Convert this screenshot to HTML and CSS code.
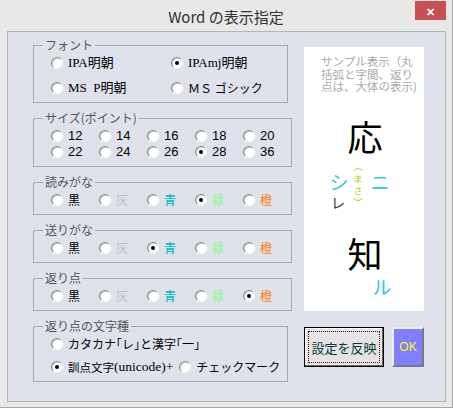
FILE: index.html
```html
<!DOCTYPE html>
<html lang="ja">
<head>
  <meta charset="UTF-8">
  <title>Word の表示指定</title>
  <link rel="stylesheet" href="styles.css">
</head>
<body>
  <div class="window">
    <div class="titlebar">
      <span class="title">Word の表示指定</span>
      <span class="close">&#x2715;</span>
    </div>
    <div class="client">
      <div class="left">
        <fieldset class="group">
          <legend>フォント</legend>
          <div class="grid fonts">
            <label class="opt serif"><span class="radio"></span>IPA明朝</label>
            <label class="opt serif"><span class="radio on"></span>IPAmj明朝</label>
            <label class="opt serif"><span class="radio"></span>MS&nbsp;&nbsp;P明朝</label>
            <label class="opt"><span class="radio"></span>ＭＳ ゴシック</label>
          </div>
        </fieldset>

        <fieldset class="group">
          <legend>サイズ(ポイント)</legend>
          <div class="grid five sizes">
            <label class="opt num"><span class="radio"></span>12</label>
            <label class="opt num"><span class="radio"></span>14</label>
            <label class="opt num"><span class="radio"></span>16</label>
            <label class="opt num"><span class="radio"></span>18</label>
            <label class="opt num"><span class="radio"></span>20</label>
            <label class="opt num"><span class="radio"></span>22</label>
            <label class="opt num"><span class="radio"></span>24</label>
            <label class="opt num"><span class="radio"></span>26</label>
            <label class="opt num"><span class="radio on"></span>28</label>
            <label class="opt num"><span class="radio"></span>36</label>
          </div>
        </fieldset>

        <fieldset class="group">
          <legend>読みがな</legend>
          <div class="grid five">
            <label class="opt c-black"><span class="radio"></span>黒</label>
            <label class="opt c-gray"><span class="radio"></span>灰</label>
            <label class="opt c-blue"><span class="radio"></span>青</label>
            <label class="opt c-green"><span class="radio on"></span>緑</label>
            <label class="opt c-orange"><span class="radio"></span>橙</label>
          </div>
        </fieldset>

        <fieldset class="group">
          <legend>送りがな</legend>
          <div class="grid five">
            <label class="opt c-black"><span class="radio"></span>黒</label>
            <label class="opt c-gray"><span class="radio"></span>灰</label>
            <label class="opt c-blue"><span class="radio on"></span>青</label>
            <label class="opt c-green"><span class="radio"></span>緑</label>
            <label class="opt c-orange"><span class="radio"></span>橙</label>
          </div>
        </fieldset>

        <fieldset class="group">
          <legend>返り点</legend>
          <div class="grid five">
            <label class="opt c-black"><span class="radio"></span>黒</label>
            <label class="opt c-gray"><span class="radio"></span>灰</label>
            <label class="opt c-blue"><span class="radio"></span>青</label>
            <label class="opt c-green"><span class="radio"></span>緑</label>
            <label class="opt c-orange"><span class="radio on"></span>橙</label>
          </div>
        </fieldset>

        <fieldset class="group">
          <legend>返り点の文字種</legend>
          <div class="kinds">
            <label class="opt"><span class="radio"></span>カタカナ｢レ｣と漢字｢一｣</label>
            <div class="kind-row">
              <label class="opt kunten"><span class="radio on"></span><span class="kanji">訓点文字</span>(unicode)+</label>
              <label class="opt"><span class="radio"></span>チェックマーク</label>
            </div>
          </div>
        </fieldset>
      </div>

      <div class="right">
        <div class="sample">
          <p class="note">サンプル表示（丸<br>括弧と字間、返り<br>点は、大体の表示)</p>
          <span class="glyph big" style="left: 61px; top: 88px;">応</span>
          <span class="glyph kana" style="left: 35px; top: 134px;">シ</span>
          <span class="glyph kana" style="left: 76px; top: 134px;">ニ</span>
          <span class="glyph ruby" style="left: 54px; top: 139px;">（まさ）</span>
          <span class="glyph mark" style="left: 34px; top: 155px;">レ</span>
          <span class="glyph big" style="left: 61px; top: 205px;">知</span>
          <span class="glyph kana" style="left: 78px; top: 239px;">ル</span>
        </div>
        <div class="buttons">
          <button class="btn apply">設定を反映</button>
          <button class="btn ok">OK</button>
        </div>
      </div>
    </div>
  </div>
</body>
</html>
```

FILE: styles.css
```css
body {
  margin: 0;
  font-family: "Noto Sans CJK JP", sans-serif;
  font-size: 12px;
  color: #000;
  background: #e8e8e8;
}

.window {
  width: 453px;
  height: 408px;
  box-sizing: border-box;
  border-right: 1px solid #a8a8a8;
  border-bottom: 1px solid #a8a8a8;
  background: #e8e8e8;
}

/* title bar */
.titlebar {
  position: relative;
  height: 31px;
  display: flex;
  justify-content: center;
  align-items: center;
}

.title {
  font-size: 15px;
  color: #333;
  margin-top: 1px;
  font-family: "Noto Sans CJK JP", sans-serif;
}

.close {
  position: absolute;
  top: 1px;
  right: 6px;
  width: 31px;
  height: 19px;
  background: #c75050;
  color: #fff;
  font-size: 11px;
  font-weight: bold;
  display: flex;
  justify-content: center;
  align-items: center;
}

/* client area */
.client {
  margin: 0 6px 0 7px;
  height: 371px;
  box-sizing: border-box;
  border: 1px solid #b4b4b4;
  background: #dfe2eb;
  display: flex;
  padding: 6px 0 0 25px;
}

.left {
  width: 255px;
}

.group {
  margin: 0 0 8px 0;
  padding: 4px 0 7px 17px;
  border: 1px solid #a9a9a9;
}

.group legend {
  padding: 0 2px;
  margin-left: -8px;
  line-height: 14px;
  color: #555;
}

.grid {
  display: grid;
  row-gap: 2px;
}

.fonts {
  grid-template-columns: 120px auto;
  row-gap: 11px;
}

.five {
  grid-template-columns: repeat(5, 48px);
}

.opt {
  display: flex;
  align-items: center;
  height: 14px;
  line-height: 14px;
  white-space: nowrap;
}

.serif {
  font-family: "Liberation Serif", "Noto Sans CJK JP", serif;
  font-size: 13px;
}

.kunten {
  font-family: "Liberation Serif", "Noto Sans CJK JP", serif;
  font-size: 13.5px;
}

.kunten .kanji {
  font-family: "Noto Sans CJK JP", sans-serif;
  font-size: 11.5px;
}

.num {
  font-family: "Liberation Sans", sans-serif;
  font-size: 13px;
}

/* classic radio button */
.radio {
  position: relative;
  flex: none;
  width: 10px;
  height: 10px;
  margin-right: 5px;
  border-radius: 50%;
  background: #fff;
  border: 1px solid;
  border-color: #8a8a8a #f4f4f4 #f4f4f4 #8a8a8a;
  box-shadow: inset 1px 1px 0 #cfcfcf;
}

.radio.on::after {
  content: '';
  position: absolute;
  left: 3px;
  top: 3px;
  width: 4px;
  height: 4px;
  border-radius: 50%;
  background: #000;
}

.c-black { color: #000; }
.c-gray { color: #c0c0c0; }
.c-blue { color: #00b4c4; }
.c-green { color: #80ff80; }
.c-orange { color: #ff8000; }

.kinds {
  display: flex;
  flex-direction: column;
  gap: 9px;
}

.kind-row {
  display: flex;
}

.kind-row .opt:first-child {
  margin-right: 6px;
}

/* sample panel and buttons */
.right {
  margin-left: 16px;
  margin-top: 9px;
  width: 120px;
}

.sample {
  position: relative;
  height: 264px;
  background: #fff;
}

.note {
  margin: 0;
  padding: 8px 0 0 17px;
  font-size: 11.5px;
  line-height: 12.5px;
  color: #aaa;
  white-space: nowrap;
}

.glyph {
  position: absolute;
  transform: translate(-50%, -50%);
  line-height: 1;
}

.big {
  font-size: 35px;
  color: #000;
}

.kana {
  font-size: 19px;
  color: #33c8d0;
}

.mark {
  font-size: 14px;
  color: #333;
}

.ruby {
  font-size: 9px;
  writing-mode: vertical-rl;
  letter-spacing: 3px;
  color: #b8cc00;
}

.buttons {
  display: flex;
  gap: 8px;
  margin-top: 16px;
}

.btn {
  height: 40px;
  margin: 0;
  padding: 0;
  font-family: "Noto Sans CJK JP", sans-serif;
  font-size: 13px;
  cursor: pointer;
}

.apply {
  width: 80px;
  color: #0b3a3a;
  background: #e4e4e4;
  border: 1px solid #000;
  box-shadow: inset -1px -1px 0 #6a6a6a, inset 1px 1px 0 #fff;
  outline: 1px dotted #600;
  outline-offset: -5px;
}

.ok {
  width: 32px;
  color: #ff0;
  background: #8080ff;
  border: 2px solid;
  border-color: #f0f0f0 #7a7a7a #7a7a7a #f0f0f0;
  font-family: "Liberation Sans", sans-serif;
  font-size: 12px;
}
```
